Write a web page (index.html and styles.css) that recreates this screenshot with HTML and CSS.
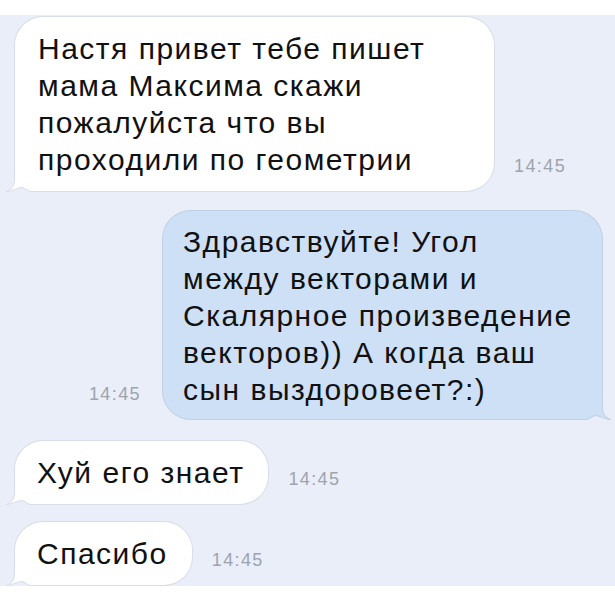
FILE: index.html
```html
<!DOCTYPE html>
<html lang="ru">
<head>
<meta charset="utf-8">
<title>Chat</title>
<link rel="stylesheet" href="styles.css">
</head>
<body>
<div class="top"></div>
<div class="chat">
  <div class="row in r1">
    <div class="bubble white b1">Настя привет тебе пишет<br>мама Максима скажи<br>пожалуйста что вы<br>проходили по геометрии<svg class="tail tail-l" width="30" height="20" viewBox="0 0 30 20"><path class="tf" d="M8.5,0 L8.5,8 C8.5,14 5,18 0.5,19.5 C6,19.5 11,15.5 16,15.5 C19,15.5 21,19.5 25,19.5 L30,19.5 L30,0 Z"/><path class="ts" d="M8.5,0 L8.5,8 C8.5,14 5,18 0.5,19.5 C6,19.5 11,15.5 16,15.5 C19,15.5 21,19.5 25,19.5 L30,19.5"/></svg></div>
    <span class="time">14:45</span>
  </div>
  <div class="row out r2">
    <span class="time">14:45</span>
    <div class="bubble blue b2">Здравствуйте! Угол<br>между векторами и<br>Скалярное произведение<br>векторов)) А когда ваш<br>сын выздоровеет?:)<svg class="tail tail-r" width="30" height="20" viewBox="0 0 30 20"><path class="tf" d="M8.5,0 L8.5,8 C8.5,14 5,18 0.5,19.5 C6,19.5 11,15.5 16,15.5 C19,15.5 21,19.5 25,19.5 L30,19.5 L30,0 Z"/><path class="ts" d="M8.5,0 L8.5,8 C8.5,14 5,18 0.5,19.5 C6,19.5 11,15.5 16,15.5 C19,15.5 21,19.5 25,19.5 L30,19.5"/></svg></div>
  </div>
  <div class="row in r3">
    <div class="bubble white short">Хуй его знает<svg class="tail tail-l" width="30" height="20" viewBox="0 0 30 20"><path class="tf" d="M8.5,0 L8.5,8 C8.5,14 5,18 0.5,19.5 C6,19.5 11,15.5 16,15.5 C19,15.5 21,19.5 25,19.5 L30,19.5 L30,0 Z"/><path class="ts" d="M8.5,0 L8.5,8 C8.5,14 5,18 0.5,19.5 C6,19.5 11,15.5 16,15.5 C19,15.5 21,19.5 25,19.5 L30,19.5"/></svg></div>
    <span class="time">14:45</span>
  </div>
  <div class="row in r4">
    <div class="bubble white short">Спасибо<svg class="tail tail-l" width="30" height="20" viewBox="0 0 30 20"><path class="tf" d="M8.5,0 L8.5,8 C8.5,14 5,18 0.5,19.5 C6,19.5 11,15.5 16,15.5 C19,15.5 21,19.5 25,19.5 L30,19.5 L30,0 Z"/><path class="ts" d="M8.5,0 L8.5,8 C8.5,14 5,18 0.5,19.5 C6,19.5 11,15.5 16,15.5 C19,15.5 21,19.5 25,19.5 L30,19.5"/></svg></div>
    <span class="time">14:45</span>
  </div>
</div>
</body>
</html>
```

FILE: styles.css
```css
html, body {
  margin: 0;
  padding: 0;
  background: #ffffff;
}
body {
  width: 615px;
  height: 607px;
  overflow: hidden;
  font-family: "Liberation Sans", Arial, sans-serif;
}
.top {
  height: 15px;
  background: #ffffff;
}
.chat {
  height: 571px;
  overflow: hidden;
  background: #e9eef8;
  padding-top: 2px;
  box-sizing: border-box;
  display: flex;
  flex-direction: column;
}
.row {
  display: flex;
  align-items: flex-end;
  flex-shrink: 0;
}
.in {
  padding-left: 15px;
  gap: 20px;
}
.out {
  justify-content: flex-end;
  padding-right: 13px;
  gap: 22px;
}
.r2 { margin-top: 20px; }
.r3 { margin-top: 22px; }
.r4 { margin-top: 18px; }

.bubble {
  position: relative;
  box-sizing: border-box;
  font-size: 30px;
  line-height: 37px;
  letter-spacing: 1.5px;
  color: #111111;
  white-space: nowrap;
  border-radius: 28px;
  padding: 13px 24px 13px 22px;
}
.white {
  background: #ffffff;
  box-shadow: 0 0 0 1px #d8dde7;
  border-bottom-left-radius: 20px;
}
.blue {
  background: #cde0f6;
  box-shadow: 0 0 0 1px #bfd0e6;
  border-bottom-right-radius: 20px;
}
.b1 {
  width: 479px;
  padding-left: 23px;
}
.b2 {
  width: 439px;
  padding: 12px 20px 11px 20px;
}
.tail {
  position: absolute;
  bottom: -1px;
  overflow: visible;
}
.tail-l { left: -9px; }
.tail-r { right: -9px; transform: scaleX(-1); }
.white .tf { fill: #ffffff; }
.white .ts { fill: none; stroke: #d8dde7; stroke-width: 1; }
.blue .tf { fill: #cde0f6; }
.blue .ts { fill: none; stroke: #bfd0e6; stroke-width: 1; }

.time {
  font-size: 18px;
  line-height: 20px;
  color: #9ea4ae;
  padding-bottom: 15px;
  letter-spacing: 1.4px;
}
```
